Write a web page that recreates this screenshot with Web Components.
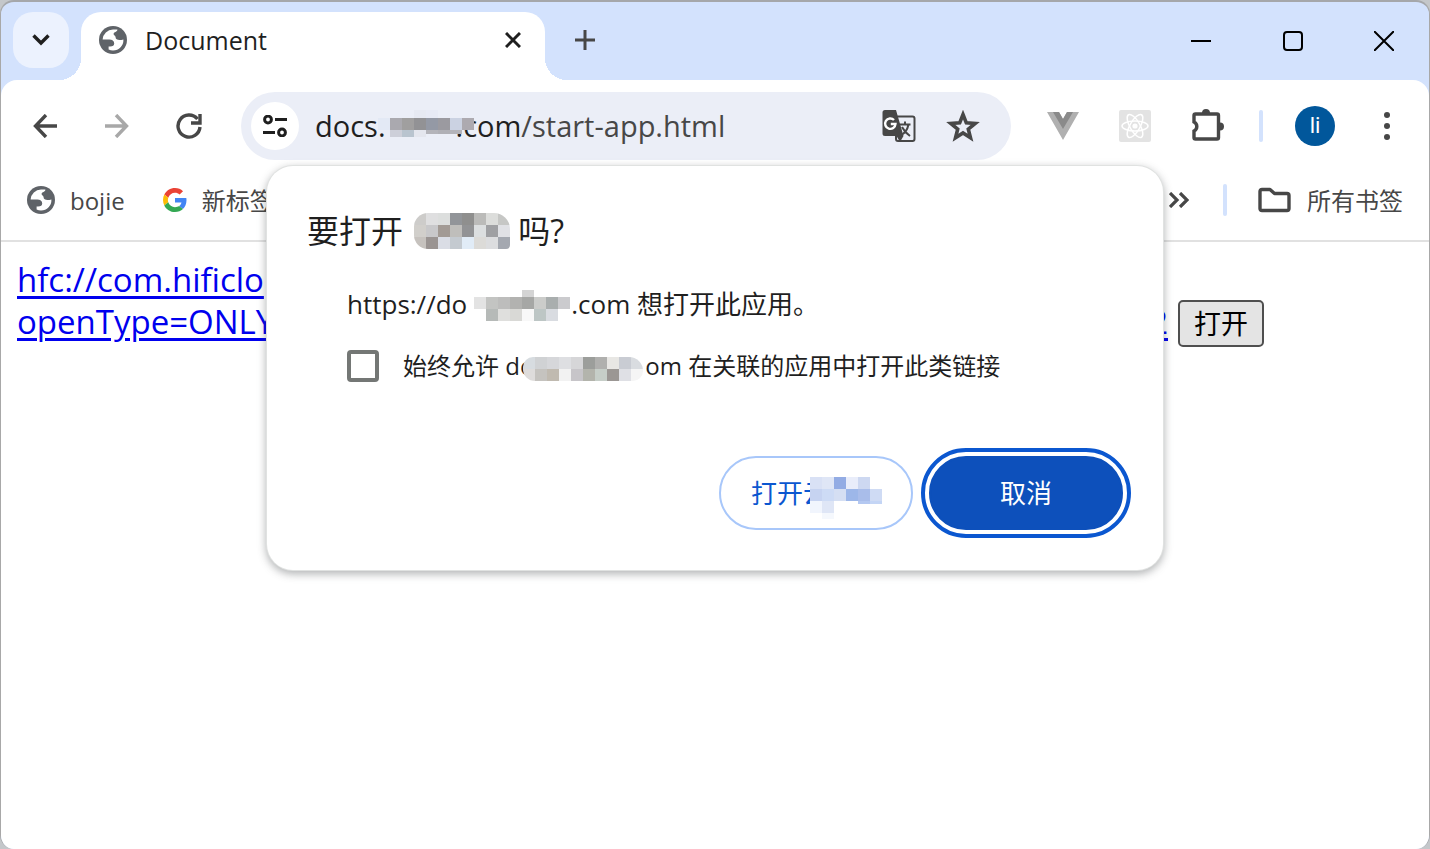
<!DOCTYPE html>
<html lang="zh-CN">
<head>
<meta charset="utf-8">
<title>Document</title>
<style>
  body {
    margin: 0;
    background: #c4c7ca;
    color: #1f1f1f;
    font-family: "Open Sans", "Noto Sans CJK SC", sans-serif;
  }
  .link-row {
    display: flex;
    align-items: flex-end;
    gap: 10px;
    padding: 17px 165px 0 16px;
    font-size: 33px;
    line-height: 42px;
  }
  .link-row a {
    flex: 1;
    color: #0000ee;
    text-decoration-thickness: 3px;
    text-underline-offset: 4px;
  }
  .link-row .tail {
    display: flex;
    justify-content: space-between;
  }
  .link-row button {
    height: 47px;
    margin-bottom: -4px;
    padding: 0 14px;
    border: 2px solid #4f4f4f;
    border-radius: 5px;
    background: #e4e4e4;
    color: #000;
    font: 27px/40px "Open Sans", "Noto Sans CJK SC", sans-serif;
  }
</style>
</head>
<body>
<browser-window>
  <tab-strip slot="tabs"><browser-tab>Document</browser-tab></tab-strip>
  <browser-toolbar slot="toolbar"></browser-toolbar>
  <bookmarks-bar slot="bookmarks">
    <bookmark-item icon="globe">bojie</bookmark-item>
    <bookmark-item icon="google">新标签页</bookmark-item>
    <bookmark-item slot="end" icon="folder">所有书签</bookmark-item>
  </bookmarks-bar>

  <div class="link-row">
    <a href="#open"><div>hfc://com.hificlo</div><div class="tail"><span>openType=ONLY</span><span>2</span></div></a>
    <button type="button">打开</button>
  </div>

  <open-dialog slot="dialog">
    <span slot="title">要打开 <pixel-mask name="title"></pixel-mask>吗?</span>
    <span slot="message">https://do<pixel-mask name="message"></pixel-mask>.com 想打开此应用。</span>
    <span slot="remember">始终允许 do<pixel-mask name="remember"></pixel-mask>om 在关联的应用中打开此类链接</span>
    <span slot="accept">打开云<pixel-mask name="accept"></pixel-mask></span>
    <span slot="cancel">取消</span>
  </open-dialog>
</browser-window>

<script>
const icons = {
  globe: `<svg width="28" height="28" viewBox="0 0 28 28"><circle cx="14" cy="14" r="14" fill="#5f6368"/><path fill="#fff" d="M3.6 13.4A10.5 10.5 0 0 1 14 3.5h4.4C18.4 6.4 14.6 5.6 14.6 8c0 1.8 2 1.4 2 3.2 0 2.6 3.2 3.4 7.8 2.2A10.5 10.5 0 0 1 14 24.5c-1.6 0-3-.3-4.4-1v-3c4 .4 5.6-.8 5.6-3 0-3-2-4.1-5-4.1z"/></svg>`,
  google: `<svg width="24" height="24" viewBox="0 0 48 48"><path fill="#EA4335" d="M24 9.5c3.54 0 6.71 1.22 9.21 3.6l6.85-6.85C35.9 2.38 30.47 0 24 0 14.62 0 6.51 5.38 2.56 13.22l7.98 6.19C12.43 13.72 17.74 9.5 24 9.5z"/><path fill="#4285F4" d="M46.98 24.55c0-1.57-.15-3.09-.38-4.55H24v9.02h12.94c-.58 2.96-2.26 5.48-4.78 7.18l7.73 6c4.51-4.18 7.09-10.36 7.09-17.65z"/><path fill="#FBBC05" d="M10.53 28.59A14.5 14.5 0 0 1 9.77 24c0-1.6.27-3.14.76-4.59l-7.98-6.19A23.9 23.9 0 0 0 0 24c0 3.88.92 7.54 2.56 10.78z"/><path fill="#34A853" d="M24 48c6.48 0 11.93-2.13 15.89-5.81l-7.73-6c-2.15 1.45-4.92 2.3-8.16 2.3-6.26 0-11.57-4.22-13.47-9.91l-7.98 6.19C6.51 42.62 14.62 48 24 48z"/></svg>`,
  folder: `<svg width="34" height="26" viewBox="0 0 34 26" fill="none" stroke="#474747" stroke-width="3.4" stroke-linejoin="round"><path d="M4 2.500h8l4.500 4H29q2 0 2 2v13q0 2-2 2H4q-2 0-2-2v-17q0-2 2-2z"/></svg>`,
  chevron: `<svg width="18" height="12" viewBox="0 0 18 12" fill="none" stroke="#1f1f1f" stroke-width="3.4"><path d="M1.500 1.500L9 9l7.500-7.500"/></svg>`,
  close: `<svg width="16" height="16" viewBox="0 0 16 16" stroke="#1f1f1f" stroke-width="3"><path d="M1 1l14 14M15 1L1 15"/></svg>`,
  plus: `<svg width="20" height="20" viewBox="0 0 20 20" stroke="#474747" stroke-width="3"><path d="M10 0v20M0 10h20"/></svg>`,
  minimize: `<svg width="20" height="20" viewBox="0 0 20 20" stroke="#000" stroke-width="2"><path d="M0 10h20"/></svg>`,
  maximize: `<svg width="20" height="20" viewBox="0 0 20 20" fill="none" stroke="#000" stroke-width="2"><rect x="1" y="1" width="18" height="18" rx="3"/></svg>`,
  exit: `<svg width="20" height="20" viewBox="0 0 20 20" stroke="#000" stroke-width="2"><path d="M0 0l20 20M20 0L0 20"/></svg>`,
  back: `<svg width="24" height="24" viewBox="0 0 24 24" fill="none" stroke="currentColor" stroke-width="3.4"><path d="M24 12H2.500M13 1L2.500 12 13 23"/></svg>`,
  forward: `<svg width="24" height="24" viewBox="0 0 24 24" fill="none" stroke="currentColor" stroke-width="3.4"><path d="M0 12h21.500M11 1l10.500 11L11 23"/></svg>`,
  reload: `<svg width="26" height="26" viewBox="0 0 26 26" fill="none" stroke="currentColor" stroke-width="3.4"><path d="M24 14A11 11 0 1 1 21.5 6"/><path d="M15 10h9V1"/></svg>`,
  tune: `<svg width="24" height="22" viewBox="0 0 24 22" fill="none" stroke="#1f1f1f" stroke-width="3"><circle cx="5" cy="4.5" r="3.4"/><path d="M12 4.5h12M0 17.5h12"/><circle cx="19" cy="17.5" r="3.4"/></svg>`,
  translate: `<svg width="34" height="34" viewBox="0 0 34 34"><rect x="14" y="7.5" width="18.5" height="24.5" rx="2" fill="none" stroke="#474747" stroke-width="2"/><path fill="#474747" d="M3 1h11l7.500 26-3.500 6L14.500 27H3q-2.500 0-2.500-2.500v-21Q.5 1 3 1z"/><path d="M12 11a5.200 5.200 0 1 0 1.500 4H8.800" fill="none" stroke="#fff" stroke-width="2.400"/><path d="M17.500 15.500h11M23 12.500v3M26.500 15.500c-1 5-4 9-8 11M20 18c2 4 4.500 6.500 8 9" fill="none" stroke="#474747" stroke-width="2"/></svg>`,
  star: `<svg width="34" height="32" viewBox="0 0 34 32" fill="none" stroke="#474747" stroke-width="3.600"><path d="M17 4.500l3.300 8.300 8.900.6-6.900 5.700 2.200 8.700L17 23l-7.500 4.800 2.200-8.700-6.900-5.700 8.900-.6z"/></svg>`,
  vue: `<svg width="32" height="28" viewBox="0 0 32 28"><path fill="#b0b0b0" d="M0 0h12l4 7 4-7h12L16 28z"/><path fill="#8a8a8a" d="M6 0h6l4 7 4-7h6L16 17z"/></svg>`,
  react: `<svg width="32" height="32" viewBox="0 0 32 32"><rect width="32" height="32" rx="2" fill="#e3e3e3"/><g fill="none" stroke="#fff" stroke-width="1.500"><ellipse cx="16" cy="16" rx="13" ry="5"/><ellipse cx="16" cy="16" rx="13" ry="5" transform="rotate(60 16 16)"/><ellipse cx="16" cy="16" rx="13" ry="5" transform="rotate(120 16 16)"/></g><circle cx="16" cy="16" r="2.600" fill="#fff"/></svg>`,
  puzzle: `<svg width="34" height="34" viewBox="0 0 34 34"><path d="M5.500 5h21.500q1.500 0 1.500 1.500v22Q28.500 30 27 30H5.500Q4 30 4 28.500V22a5 5 0 0 0 0-9V6.500Q4 5 5.500 5z" fill="none" stroke="#474747" stroke-width="3.400"/><path fill="#474747" d="M12 4a4 4 0 0 1 8 0zM30 13.500a4 4 0 0 1 0 8z"/></svg>`,
  more: `<svg width="6" height="28" viewBox="0 0 6 28" fill="#474747"><circle cx="3" cy="3" r="3"/><circle cx="3" cy="14" r="3"/><circle cx="3" cy="25" r="3"/></svg>`,
  overflow: `<svg width="20" height="16" viewBox="0 0 20 16" fill="none" stroke="#474747" stroke-width="3.200"><path d="M1 1l7 7-7 7M11 1l7 7-7 7"/></svg>`
};

const base = `
  * { box-sizing: border-box; }
  svg { display: block; flex: none; }
  button {
    display: flex;
    align-items: center;
    justify-content: center;
    flex: none;
    margin: 0;
    padding: 0;
    border: 0;
    background: none;
    color: inherit;
    font: inherit;
  }
`;

class BaseElement extends HTMLElement {
  constructor() {
    super();
    this.attachShadow({ mode: "open" });
  }
  connectedCallback() {
    this.shadowRoot.innerHTML = `<style>${base}${this.styles()}</style>${this.render()}`;
  }
}

// rows of 12px blocks: [x, y, height, colors]; y = 0 is the text baseline
const masks = {
  url: { width: 70, rows: [
    [28, -27, 8, "e6e9f2 e7eaf5"],
    [-8, -19, 12, "e3e9f5 aaa9af a09f9f 929295 9499a5 9b9aa0 cbd2e2 adaab0"],
    [4, -7, 7, "cdcfd9 b9c4cf e4e6ee"],
    [40, -7, 4, "b4b4ba b0b0b6 b4b4ba"]
  ] },
  title: { width: 107, round: "14px 16px 4px 14px", rows: [
    [3, -30, 12, "cdccca dfdfe0 dcdedd 929599 8f8f8e bbbbb9 dcdddb c6c7c5"],
    [3, -18, 12, "d1cfcb c8c8ca a29a94 bfbebb 929395 dcdfe0 9fa0a3 e0e1e5"],
    [3, -6, 12, "c6c2be 9a9492 dadde5 c4cad0 e1ecf7 dcdbd8 dcdddf a4a8b0"]
  ] },
  message: { width: 104, rows: [
    [55, -24, 7, "d4d4d4"],
    [7, -17, 12, "e3e3e3 c3c4c2 bdbdbc b2b2b0 a6a7a5 cbccca a9aeae cbcbce"],
    [19, -5, 12, "b6bab8 dfdfdd d9d9d6 f8f8f8 bdc6c5 d9dce1"]
  ] },
  remember: { width: 111, round: "10px 14px 10px 12px", rows: [
    [-11, -18, 12, "d7dce0 d0d2d4 d6d7da dedfe2 d6d6d8 9c9e9b b0b0ae e8e7e4 c9ccd3 d9dce0"],
    [-11, -6, 12, "dedcdb c5c3bf c0bab0 f2f2f2 c7c5c9 b3b4ac c6cec8 9b9794 dfe0e5 f5f5f5"]
  ] },
  accept: { width: 52, rows: [
    [-19, -26, 12, "d9e1f5 dfe6f6 93ace4 e9edfa cdd8f1"],
    [-19, -14, 12, "c6d3f1 cddbf5 d5dff3 9db7e9 a9bdea cfdbf4"],
    [-19, -2, 12, "f1f5fd dfe6f6"],
    [29, -2, 3, "b4c8f1 c4d5f5"],
    [-7, 10, 6, "f5f8fd"]
  ] }
};

class PixelMask extends BaseElement {
  styles() {
    return `
      :host { display: inline-block; position: relative; width: ${masks[this.getAttribute("name")].width}px; height: 0; }
      svg { width: 1px; height: 1px; overflow: visible; }
    `;
  }
  render() {
    const { rows, round } = masks[this.getAttribute("name")];
    const rects = rows.map(([x, y, h, colors]) =>
      colors.split(" ").map((c, i) => `<rect x="${x + i * 12}" y="${y}" width="12" height="${h}" fill="#${c}"/>`).join("")
    ).join("");
    return `<svg aria-hidden="true" shape-rendering="crispEdges"><g${round ? ` style="clip-path: inset(0 round ${round})"` : ""}>${rects}</g></svg>`;
  }
}

class BrowserWindow extends BaseElement {
  styles() {
    return `
      :host {
        display: flex;
        flex-direction: column;
        position: relative;
        box-sizing: border-box;
        min-height: 100vh;
        border: 1px solid #a8a8a8;
        border-top: 2px solid #a5a7aa;
        border-bottom: 0;
        border-radius: 14px;
        background: #d3e2fd;
        overflow: hidden;
      }
      .chrome { border-radius: 16px 16px 0 0; background: #fff; border-bottom: 2px solid #e1e1e1; }
      main { flex: 1; background: #fff; }
    `;
  }
  render() {
    return `
      <slot name="tabs"></slot>
      <div class="chrome"><slot name="toolbar"></slot><slot name="bookmarks"></slot></div>
      <main><slot></slot></main>
      <slot name="dialog"></slot>`;
  }
}

class TabStrip extends BaseElement {
  styles() {
    return `
      :host { display: flex; height: 78px; padding-left: 12px; }
      .search { width: 56px; height: 56px; margin: 10px 12px 0 0; border-radius: 20px; background: #ecf2fe; }
      .new { width: 56px; height: 56px; margin: 10px 0 0 12px; }
      .controls { display: flex; margin-left: auto; }
      .controls button { width: 92px; height: 78px; }
      .controls button:last-child { width: 90px; }
    `;
  }
  render() {
    return `
      <button class="search" aria-label="搜索标签页">${icons.chevron}</button>
      <slot></slot>
      <button class="new" aria-label="新建标签页">${icons.plus}</button>
      <div class="controls">
        <button aria-label="最小化">${icons.minimize}</button>
        <button aria-label="最大化">${icons.maximize}</button>
        <button aria-label="关闭">${icons.exit}</button>
      </div>`;
  }
}

class BrowserTab extends BaseElement {
  styles() {
    return `
      :host {
        display: flex;
        align-items: center;
        position: relative;
        box-sizing: border-box;
        flex: 0 1 464px;
        height: 68px;
        margin-top: 10px;
        padding: 0 20px 12px 18px;
        border-radius: 20px 20px 0 0;
        background: #fff;
        font-size: 25px;
        line-height: 36px;
      }
      /* flared feet of the active tab */
      :host::before, :host::after {
        content: "";
        position: absolute;
        bottom: 0;
        width: 22px;
        height: 22px;
      }
      :host::before { right: 100%; background: radial-gradient(circle at 0 0, transparent 22px, #fff 22px); }
      :host::after { left: 100%; background: radial-gradient(circle at 100% 0, transparent 22px, #fff 22px); }
      .label { flex: 1; margin-left: 18px; }
      button { width: 24px; height: 24px; }
    `;
  }
  render() {
    return `${icons.globe}<span class="label"><slot></slot></span><button aria-label="关闭标签页">${icons.close}</button>`;
  }
}

class OmniBox extends BaseElement {
  styles() {
    return `
      :host {
        display: flex;
        align-items: center;
        box-sizing: border-box;
        flex: 1;
        min-width: 0;
        height: 68px;
        padding: 0 16px 0 10px;
        border-radius: 34px;
        background: #ebeef7;
        font-size: 29px;
        line-height: 38px;
      }
      .site { width: 48px; height: 48px; margin-right: 16px; border-radius: 24px; background: #fff; }
      label { flex: none; color: #1f1f1f; }
      input {
        flex: 1;
        min-width: 0;
        padding: 0;
        border: 0;
        outline: 0;
        background: none;
        color: #474747;
        font: inherit;
      }
      .action { width: 64px; height: 56px; }
    `;
  }
  render() {
    return `
      <button class="site" aria-label="查看网站信息">${icons.tune}</button>
      <label for="path">docs.<pixel-mask name="url"></pixel-mask>.com</label>
      <input id="path" type="text" value="/start-app.html">
      <button class="action" aria-label="翻译此页">${icons.translate}</button>
      <button class="action" aria-label="为此标签页添加书签">${icons.star}</button>`;
  }
}

class BrowserToolbar extends BaseElement {
  styles() {
    return `
      :host {
        display: flex;
        align-items: center;
        height: 92px;
        padding: 0 14px 0 16px;
        color: #474747;
      }
      nav, .extensions { display: flex; gap: 16px; }
      nav { margin-right: 24px; }
      .extensions { margin: 0 24px; }
      button { width: 56px; height: 56px; }
      button:disabled { color: #a8a8a8; }
      .divider { width: 4px; height: 32px; border-radius: 2px; background: #d3e2fd; }
      .avatar {
        width: 40px;
        height: 40px;
        margin: 0 24px 0 32px;
        border-radius: 20px;
        background: #01579b;
        color: #fff;
        font: 22px/40px Roboto, sans-serif;
      }
    `;
  }
  render() {
    return `
      <nav>
        <button aria-label="后退">${icons.back}</button>
        <button aria-label="前进" disabled>${icons.forward}</button>
        <button aria-label="重新加载">${icons.reload}</button>
      </nav>
      <omni-box></omni-box>
      <div class="extensions">
        <button aria-label="Vue">${icons.vue}</button>
        <button aria-label="React">${icons.react}</button>
        <button aria-label="扩展程序">${icons.puzzle}</button>
      </div>
      <div class="divider"></div>
      <button class="avatar">li</button>
      <button aria-label="菜单">${icons.more}</button>`;
  }
}

class BookmarksBar extends BaseElement {
  styles() {
    return `
      :host {
        display: flex;
        align-items: center;
        height: 56px;
        margin-bottom: 12px;
        padding: 0 26px;
        color: #474747;
      }
      .items { display: flex; gap: 38px; flex: 1; }
      .overflow { width: 40px; height: 40px; }
      .divider { width: 4px; height: 32px; margin: 0 31px 0 24px; border-radius: 2px; background: #d3e2fd; }
    `;
  }
  render() {
    return `
      <div class="items"><slot></slot></div>
      <button class="overflow" aria-label="更多书签">${icons.overflow}</button>
      <div class="divider"></div>
      <slot name="end"></slot>`;
  }
}

class BookmarkItem extends BaseElement {
  styles() {
    return `
      :host { display: block; }
      button { gap: 15px; font-size: 24px; line-height: 36px; }
      span { padding-top: 2px; }
    `;
  }
  render() {
    return `<button>${icons[this.getAttribute("icon")]}<span><slot></slot></span></button>`;
  }
}

class OpenDialog extends BaseElement {
  styles() {
    return `
      :host {
        position: absolute;
        top: 164px;
        left: 50%;
        transform: translateX(-50%);
        box-sizing: border-box;
        width: 896px;
        max-width: 100%;
        padding: 40px;
        border-radius: 26px;
        background: #fff;
        box-shadow: 0 0 0 1px #e0e2e1, 0 3px 8px 1px rgba(60, 64, 67, .4);
      }
      h2 { margin: 0; font-size: 32px; font-weight: 400; line-height: 50px; }
      .body { padding-left: 40px; }
      p { margin: 28px 0 26px; font-size: 26px; line-height: 40px; }
      .remember { display: flex; align-items: center; gap: 24px; height: 32px; font-size: 24px; line-height: 32px; }
      input {
        appearance: none;
        flex: none;
        width: 32px;
        height: 32px;
        margin: 0;
        border: 4px solid #747775;
        border-radius: 4px;
      }
      .actions { display: flex; justify-content: flex-end; gap: 16px; margin-top: 74px; }
      .actions button {
        height: 74px;
        min-width: 194px;
        padding: 0 30px;
        border: 2px solid #a8c7fa;
        border-radius: 37px;
        color: #0b57d0;
        font-size: 26px;
        line-height: 36px;
      }
      .actions .cancel {
        border-color: #0d50bb;
        background: #0d50bb;
        color: #fff;
        outline: 4px solid #0b57d0;
        outline-offset: 4px;
      }
    `;
  }
  render() {
    return `
      <h2><slot name="title"></slot></h2>
      <div class="body">
        <p><slot name="message"></slot></p>
        <div class="remember">
          <input id="remember" type="checkbox">
          <label for="remember"><slot name="remember"></slot></label>
        </div>
      </div>
      <div class="actions">
        <button class="accept"><slot name="accept"></slot></button>
        <button class="cancel"><slot name="cancel"></slot></button>
      </div>`;
  }
}

customElements.define("pixel-mask", PixelMask);
customElements.define("browser-tab", BrowserTab);
customElements.define("tab-strip", TabStrip);
customElements.define("omni-box", OmniBox);
customElements.define("browser-toolbar", BrowserToolbar);
customElements.define("bookmark-item", BookmarkItem);
customElements.define("bookmarks-bar", BookmarksBar);
customElements.define("open-dialog", OpenDialog);
customElements.define("browser-window", BrowserWindow);
</script>
</body>
</html>
